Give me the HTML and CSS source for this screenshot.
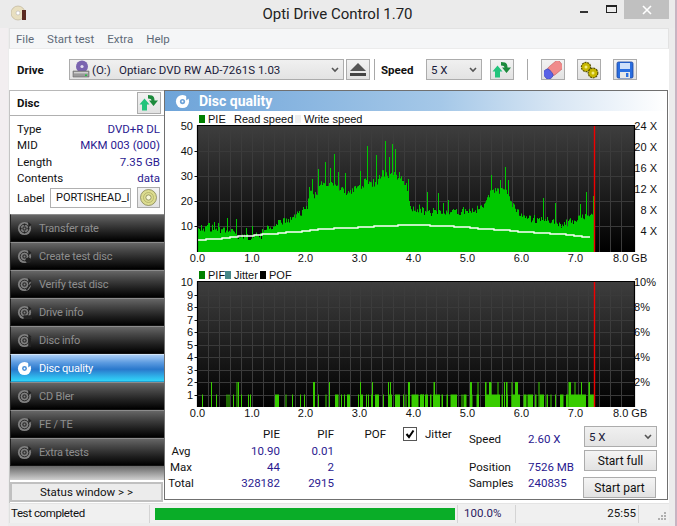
FILE: index.html
```html
<!DOCTYPE html>
<html lang="en">
<head>
<meta charset="utf-8">
<title>Opti Drive Control 1.70</title>
<link rel="stylesheet" href="styles.css">
</head>
<body>
<svg class="defs" width="0" height="0">
  <defs>
    <symbol id="i-disc" viewBox="0 0 16 16">
      <circle cx="8" cy="8" r="7" fill="currentColor"/>
      <circle cx="8" cy="8" r="4.6" fill="none" stroke="#222" stroke-width="1"/>
      <circle cx="8" cy="8" r="2.4" fill="#333"/>
      <circle cx="8" cy="8" r="1" fill="currentColor"/>
      <path d="M12 1 L15.5 4 L12 7 Z" fill="#222"/>
    </symbol>
    <symbol id="i-refresh" viewBox="0 0 22 20">
      <path d="M1.5 11.5 L6.5 5.5 L11.5 11.5 L9 11.5 L9 17.5 L4 17.5 L4 11.5 Z" fill="#22c47c"/>
      <path d="M10 2 L14 2.5 Q16.5 3.5 16.5 7.5 L20 7.5 L15.5 13 L11 7.5 L13.5 7.5 Q13.5 5.5 10 5.5 Z" fill="#1c8a3c"/>
    </symbol>
  </defs>
</svg>
<div class="window">
  <header class="titlebar">
    <div class="app-icon">
      <svg width="16" height="16" viewBox="0 0 16 16"><circle cx="7" cy="8" r="7" fill="#e8dfc0" stroke="#b8ad90" stroke-width=".6"/><circle cx="7" cy="8" r="2" fill="#fff" stroke="#aaa" stroke-width=".5"/><rect x="11" y="5" width="4" height="10" fill="#5a2a20"/></svg>
    </div>
    <div class="title">Opti Drive Control 1.70</div>
    <div class="win-controls">
      <span class="win-min"></span>
      <span class="win-max"></span>
      <span class="win-close">
        <svg width="10" height="10" viewBox="0 0 10 10"><path d="M1 1 L9 9 M9 1 L1 9" stroke="#fff" stroke-width="1.6"/></svg>
      </span>
    </div>
  </header>
  <div class="client">
    <nav class="menu">
      <span class="menu-item">File</span>
      <span class="menu-item">Start test</span>
      <span class="menu-item">Extra</span>
      <span class="menu-item">Help</span>
    </nav>
    <div class="toolbar">
      <span class="tool-label drive-label">Drive</span>
      <div class="combo drive-combo">
        <svg class="drive-icon" width="18" height="19" viewBox="0 0 18 19">
          <circle cx="10" cy="6.5" r="6" fill="#7a64b0"/><circle cx="10" cy="6.5" r="1.6" fill="#e4def0"/>
          <path d="M1 11 L17 11 L17 17 L1 17 Z" fill="#9a9a9a" stroke="#666" stroke-width=".6"/>
          <rect x="2" y="12" width="14" height="1.4" fill="#cfcfcf"/><rect x="13" y="14.5" width="2" height="1.5" fill="#20c040"/>
        </svg>
        <span class="drive-letter">(O:)</span>
        <span class="combo-text">Optiarc DVD RW AD-7261S 1.03</span>
        <svg class="chevron" width="8" height="6" viewBox="0 0 8 6"><path d="M1 1 L4 4 L7 1" fill="none" stroke="#555" stroke-width="1.6"/></svg>
      </div>
      <button class="tool-btn eject-btn">
        <svg width="16" height="13" viewBox="0 0 16 13"><path d="M8 0 L16 8 L0 8 Z" fill="#555"/><rect y="10" width="16" height="3" fill="#444"/></svg>
      </button>
      <span class="tool-sep sep-speed"></span>
      <span class="tool-label speed-label">Speed</span>
      <div class="combo speed-combo">
        <span class="combo-text">5 X</span>
        <svg class="chevron" width="8" height="6" viewBox="0 0 8 6"><path d="M1 1 L4 4 L7 1" fill="none" stroke="#555" stroke-width="1.6"/></svg>
      </div>
      <button class="tool-btn refresh-btn"><svg width="22" height="20"><use href="#i-refresh"/></svg></button>
      <span class="tool-sep sep-tools"></span>
      <button class="tool-btn erase-btn">
        <svg width="18" height="18" viewBox="0 0 18 18"><g transform="rotate(-40 9 9)"><rect x="5.5" y="4" width="14" height="10" rx="2" fill="#f08a8a" stroke="#c86060" stroke-width=".6"/><rect x="-1.5" y="4" width="8" height="10" rx="3" fill="#5a62e6" stroke="#3a40a8" stroke-width=".6"/></g></svg>
      </button>
      <button class="tool-btn gears-btn">
        <svg width="19" height="18" viewBox="0 0 19 18"><circle cx="6" cy="6" r="4.6" fill="#c8b800" stroke="#5a5200" stroke-width="1.2" stroke-dasharray="2 .8"/><circle cx="6" cy="6" r="1.5" fill="#f4ec80"/><circle cx="13" cy="12" r="4.8" fill="#c8b800" stroke="#5a5200" stroke-width="1.2" stroke-dasharray="2 .8"/><circle cx="13" cy="12" r="1.5" fill="#f4ec80"/></svg>
      </button>
      <button class="tool-btn save-btn">
        <svg width="18" height="18" viewBox="0 0 18 18"><rect x="1" y="1" width="16" height="16" rx="1.5" fill="#2a6ee0" stroke="#1a44a0" stroke-width=".8"/><rect x="4" y="2" width="10" height="6" fill="#cfe0fa"/><rect x="4" y="11" width="10" height="6" fill="#e8e8e8"/><rect x="10" y="12" width="2.4" height="4" fill="#2a6ee0"/></svg>
      </button>
    </div>
    <div class="main">
      <aside class="sidebar">
        <div class="disc-head">
          <span class="disc-title">Disc</span>
          <button class="tool-btn disc-refresh"><svg width="22" height="20"><use href="#i-refresh"/></svg></button>
        </div>
        <dl class="disc-info">
          <div class="info-row"><dt>Type</dt><dd>DVD+R DL</dd></div>
          <div class="info-row"><dt>MID</dt><dd>MKM 003 (000)</dd></div>
          <div class="info-row"><dt>Length</dt><dd>7.35 GB</dd></div>
          <div class="info-row"><dt>Contents</dt><dd>data</dd></div>
        </dl>
        <div class="label-row">
          <span class="label-name">Label</span>
          <span class="label-input">PORTISHEAD_I</span>
          <button class="tool-btn cd-btn">
            <svg width="17" height="17" viewBox="0 0 17 17"><circle cx="8.5" cy="8.5" r="8" fill="#dcdc90" stroke="#77774a" stroke-width=".7"/><circle cx="8.5" cy="8.5" r="5" fill="none" stroke="#a8a860" stroke-width=".7"/><circle cx="8.5" cy="8.5" r="2.6" fill="#f8f8d8" stroke="#77774a" stroke-width=".7"/></svg>
          </button>
        </div>
        <ul class="nav">
          <li class="nav-item"><svg class="nav-icon" width="15" height="15" viewBox="0 0 16 16"><use href="#i-disc" width="16" height="16"/><path class="ic-cut" d="M3 8h2M11 8h2M8 3v2M8 11v2"/></svg>Transfer rate</li>
          <li class="nav-item"><svg class="nav-icon" width="15" height="15" viewBox="0 0 16 16"><use href="#i-disc" width="16" height="16"/><circle class="ic-mark" cx="12" cy="12" r="3"/></svg>Create test disc</li>
          <li class="nav-item"><svg class="nav-icon" width="15" height="15" viewBox="0 0 16 16"><use href="#i-disc" width="16" height="16"/><path class="ic-cut" d="M10 14l5-7"/></svg>Verify test disc</li>
          <li class="nav-item"><svg class="nav-icon" width="15" height="15" viewBox="0 0 16 16"><use href="#i-disc" width="16" height="16"/><rect class="ic-mark" x="7" y="11" width="9" height="4"/></svg>Drive info</li>
          <li class="nav-item"><svg class="nav-icon" width="15" height="15" viewBox="0 0 16 16"><use href="#i-disc" width="16" height="16"/><rect class="ic-mark" x="12" y="5" width="3" height="10"/></svg>Disc info</li>
          <li class="nav-item nav-active"><svg class="nav-icon" width="15" height="15" viewBox="0 0 16 16"><circle cx="8" cy="8" r="7" fill="#fff"/><circle cx="8" cy="8" r="2.6" fill="#4a90d8"/><circle cx="8" cy="8" r="1" fill="#fff"/><path d="M12 1 L15.5 4 L12 7 Z" fill="#4a90d8"/></svg>Disc quality</li>
          <li class="nav-item"><svg class="nav-icon" width="15" height="15" viewBox="0 0 16 16"><use href="#i-disc" width="16" height="16"/></svg>CD Bler</li>
          <li class="nav-item"><svg class="nav-icon" width="15" height="15" viewBox="0 0 16 16"><use href="#i-disc" width="16" height="16"/></svg>FE / TE</li>
          <li class="nav-item"><svg class="nav-icon" width="15" height="15" viewBox="0 0 16 16"><use href="#i-disc" width="16" height="16"/></svg>Extra tests</li>
        </ul>
        <div class="nav-fill"></div>
        <button class="status-btn">Status window &gt; &gt;</button>
      </aside>
      <section class="panel">
        <h1 class="panel-head">
          <svg class="panel-icon" width="15" height="15" viewBox="0 0 16 16"><circle cx="8" cy="8" r="7" fill="#fff"/><circle cx="8" cy="8" r="2.8" fill="#6fa3d8"/><circle cx="8" cy="8" r="1" fill="#fff"/><path d="M12 1 L15.5 4 L12 7 Z" fill="#6fa3d8"/></svg>
          Disc quality
        </h1>
        <svg class="chart" id="chart-pie" width="502" height="157" viewBox="165 111 502 157">
          <defs><linearGradient id="plot-bg" x1="0" y1="0" x2="0" y2="1"><stop offset="0" stop-color="#3e3e3e"/><stop offset="1" stop-color="#000"/></linearGradient></defs>
          <rect class="key-green" x="199" y="115" width="6" height="8"/>
          <text class="ax" x="208" y="119">PIE</text>
          <text class="ax" x="234" y="119">Read speed</text>
          <rect class="key-write" x="295" y="115" width="6" height="8"/>
          <text class="ax" x="304" y="119">Write speed</text>
          <g class="plot"></g>
          <g class="ax-l">
            <text x="193" y="126">50</text><text x="193" y="151">40</text><text x="193" y="176">30</text><text x="193" y="201">20</text><text x="193" y="226">10</text>
          </g>
          <g class="ax-r">
            <text x="657" y="126">24 X</text><text x="657" y="147">20 X</text><text x="657" y="168">16 X</text><text x="657" y="189">12 X</text><text x="657" y="210">8 X</text><text x="657" y="231">4 X</text>
          </g>
          <g class="ax-b">
            <text x="197.5" y="258">0.0</text><text x="252" y="258">1.0</text><text x="305.5" y="258">2.0</text><text x="359.5" y="258">3.0</text><text x="413.5" y="258">4.0</text><text x="467.5" y="258">5.0</text><text x="521.5" y="258">6.0</text><text x="575.5" y="258">7.0</text>
          </g>
          <text class="ax" x="613" y="258">8.0 GB</text>
        </svg>
        <svg class="chart" id="chart-pif" width="502" height="153" viewBox="165 268 502 153">
          <rect class="key-green" x="199" y="271" width="6" height="8"/>
          <text class="ax" x="208" y="275">PIF</text>
          <rect class="key-jitter" x="225" y="271" width="6" height="8"/>
          <text class="ax" x="234" y="275">Jitter</text>
          <rect class="key-black" x="260" y="271" width="6" height="8"/>
          <text class="ax" x="269" y="275">POF</text>
          <g class="plot"></g>
          <g class="ax-l">
            <text x="193" y="282">10</text><text x="193" y="295">9</text><text x="193" y="307">8</text><text x="193" y="320">7</text><text x="193" y="332">6</text><text x="193" y="345">5</text><text x="193" y="357">4</text><text x="193" y="370">3</text><text x="193" y="382">2</text><text x="193" y="395">1</text>
          </g>
          <g class="ax-r">
            <text x="656" y="282">10%</text><text x="650" y="307">8%</text><text x="650" y="332">6%</text><text x="650" y="357">4%</text><text x="650" y="382">2%</text>
          </g>
          <g class="ax-b">
            <text x="197.5" y="413">0.0</text><text x="252" y="413">1.0</text><text x="305.5" y="413">2.0</text><text x="359.5" y="413">3.0</text><text x="413.5" y="413">4.0</text><text x="467.5" y="413">5.0</text><text x="521.5" y="413">6.0</text><text x="575.5" y="413">7.0</text>
          </g>
          <text class="ax" x="613" y="413">8.0 GB</text>
        </svg>
        <div class="stats">
          <div class="stat-table">
            <span></span><span class="sh">PIE</span><span class="sh">PIF</span><span class="sh">POF</span>
            <span class="sl">Avg</span><span class="sv">10.90</span><span class="sv">0.01</span><span></span>
            <span class="sl">Max</span><span class="sv">44</span><span class="sv">2</span><span></span>
            <span class="sl">Total</span><span class="sv">328182</span><span class="sv">2915</span><span></span>
          </div>
          <div class="jitter">
            <span class="check"><svg width="12" height="12" viewBox="0 0 12 12"><path d="M2.5 6 L5 9 L9.5 2.5" fill="none" stroke="#000" stroke-width="2"/></svg></span>
            <span>Jitter</span>
          </div>
          <div class="live">
            <span class="ll">Speed</span><span class="lv">2.60 X</span>
            <span class="ll"></span><span class="lv"></span>
            <span class="ll">Position</span><span class="lv">7526 MB</span>
            <span class="ll">Samples</span><span class="lv">240835</span>
          </div>
          <div class="actions">
            <div class="combo action-combo">
              <span class="combo-text">5 X</span>
              <svg class="chevron" width="8" height="6" viewBox="0 0 8 6"><path d="M1 1 L4 4 L7 1" fill="none" stroke="#555" stroke-width="1.6"/></svg>
            </div>
            <button class="start-btn start-full">Start full</button>
            <button class="start-btn start-part">Start part</button>
          </div>
        </div>
      </section>
    </div>
    <footer class="statusbar">
      <span class="st-msg">Test completed</span>
      <div class="progress"></div>
      <span class="st-pct">100.0%</span>
      <span class="st-time">25:55</span>
      <svg class="grip" width="10" height="9" viewBox="0 0 10 9"><path d="M7 0h2v2H7zM4 3h2v2H4zM7 3h2v2H7zM1 6h2v2H1zM4 6h2v2H4zM7 6h2v2H7z" fill="#b0b0b0"/></svg>
    </footer>
  </div>
</div>
<script src="chart.js"></script>
</body>
</html>
```
FILE: styles.css
```css
* { box-sizing: border-box; }
html, body { margin: 0; padding: 0; }
body {
  width: 677px; height: 526px; overflow: hidden;
  background: #c8b4c2;
  font-family: Roboto, "Noto Sans", sans-serif;
  font-size: 11.5px; color: #111;
}
.defs { position: absolute; }
.window {
  width: 675px; height: 526px;
  display: flex; flex-direction: column;
  background: linear-gradient(90deg, #f2eef0 0 8px, #ececec 8px);
}
.titlebar {
  height: 28px; flex: none;
  display: grid; grid-template-columns: 1fr auto 1fr;
  background: #ebebeb;
}
.app-icon { padding: 5px 0 0 11px; }
.title { font-size: 15px; line-height: 28px; color: #222; }
.win-controls { display: flex; justify-content: flex-end; padding-right: 6px; align-items: flex-start; }
.win-min { width: 8px; height: 2px; background: #333; margin: 11px 18px 0 0; }
.win-max { width: 11px; height: 8px; border: 1px solid #222; border-top-width: 2px; margin: 5px 7px 0 0; }
.win-close { width: 45px; height: 19px; background: #c0c0c0; display: flex; align-items: center; justify-content: center; }

.client {
  margin-left: 9px; width: 660px; height: 495px; flex: none;
  display: flex; flex-direction: column;
  background: #fff;
}
.menu {
  height: 21px; flex: none; background: #f5f6f7;
  border: 1px solid #e2e2e2; border-bottom-color: #ececec;
  display: flex; align-items: center; padding-left: 6px; gap: 13px;
}
.menu-item { font-size: 11.5px; color: #5f6a78; }

.toolbar { height: 41px; flex: none; display: flex; align-items: center; background: #fff; }
.tool-label { font-weight: 700; font-size: 11.5px; color: #111; }
.drive-label { margin-left: 8px; width: 52px; }
.combo {
  height: 21px; display: flex; align-items: center;
  background: linear-gradient(#f0f0f0, #e3e3e3);
  border: 1px solid #acacac; font-size: 11.5px; color: #1a1a3a;
}
.drive-combo { width: 275px; }
.drive-icon { margin-left: 2px; flex: none; }
.drive-letter { margin-left: 2px; width: 27px; }
.chevron { margin-left: auto; margin-right: 4px; flex: none; }
.tool-btn {
  width: 24px; height: 21px; padding: 0; flex: none;
  display: flex; align-items: center; justify-content: center;
  background: linear-gradient(#f2f2f2, #e2e2e2);
  border: 1px solid #acacac;
}
.eject-btn { margin-left: 2px; }
.tool-sep { width: 1px; height: 21px; background: #a8a8a8; flex: none; }
.sep-speed { margin-left: 4px; }
.speed-label { margin-left: 6px; width: 45px; }
.speed-combo { width: 56px; padding-left: 4px; }
.refresh-btn { margin-left: 8px; }
.sep-tools { margin-left: 13px; }
.erase-btn { margin-left: 13px; }
.gears-btn { margin-left: 12px; }
.save-btn { margin-left: 12px; }

.main { height: 413px; flex: none; display: flex; align-items: flex-start; }
.sidebar { width: 155px; height: 413px; flex: none; display: flex; flex-direction: column; background: #fff; border-left: 1px solid #c4c4c4; }
.disc-head {
  height: 26px; flex: none; display: flex; align-items: center; justify-content: space-between;
  border-top: 1px solid #b8b8b8; border-bottom: 1px solid #b0b0b0;
  padding: 0 3px 0 7px;
}
.disc-title { font-weight: 700; font-size: 11.5px; }
.disc-refresh { height: 22px; }
.disc-info { margin: 5px 4px 0 7px; }
.info-row { display: flex; justify-content: space-between; height: 16.3px; line-height: 16px; }
.info-row dt { color: #111; }
.info-row dd { margin: 0; color: #2a1a90; }
.label-row { display: flex; align-items: center; margin: 1px 3px 0 7px; height: 21px; }
.label-name { width: 33px; flex: none; }
.label-input {
  width: 81px; height: 20px; border: 1px solid #b0b0b0; background: #fff; line-height: 18px;
  padding-left: 5px; white-space: nowrap; flex: none; font-size: 11px;
}
.cd-btn { margin-left: 6px; height: 21px; width: 23px; }
.nav { list-style: none; margin: 6px 0 0; padding: 0; flex: none; }
.nav-item {
  height: 28px; display: flex; align-items: center; gap: 7px;
  padding-left: 6px; color: #8e8e8e; font-size: 11px; letter-spacing: -.2px;
  background: linear-gradient(#666 0, #4a4a4a 25%, #1c1c1c 70%, #000);
  border-top: 1px solid #8c8c8c; border-bottom: 1px solid #111;
  border-left: 1px solid #222;
}
.nav-icon { color: #808080; flex: none; }
.ic-cut { stroke: #222; stroke-width: 1.4; fill: none; }
.ic-mark { fill: #222; }
.nav-active {
  color: #fff;
  background: linear-gradient(#a8ccf4 0, #5a9ae0 30%, #2a78cc 55%, #2fb8ec 85%, #30d4f8);
  border-top-color: #d0e4f8; border-bottom-color: #20a0d0;
}
.nav-fill { height: 14px; flex: none; background: linear-gradient(#666, #d0d0d0); }
.status-btn {
  height: 20px; margin: 2px 0 0 0; flex: none; width: 153px;
  border: 2px solid #c0c0c0; background: #ececec;
  font-family: inherit; font-size: 11.5px; color: #111; padding: 0;
}

.panel {
  width: 504px; height: 410px; flex: none;
  border: 1px solid #707070; background: #fff;
  display: flex; flex-direction: column;
}
.panel-head {
  height: 20px; margin: 0; flex: none;
  display: flex; align-items: center; gap: 9px; padding-left: 10px;
  font-size: 14px; font-weight: 700; color: #fff;
  background: linear-gradient(90deg, #6ea4d9 0, #a5c8e8 55%, #d8e6f4 78%, #fff 100%);
}
.panel-icon { flex: none; }
.chart { display: block; flex: none; }
.ax, .ax-l text, .ax-r text, .ax-b text {
  font-family: "Liberation Sans", Arial, sans-serif; font-size: 11px; fill: #111;
  dominant-baseline: central;
}
.ax-l text, .ax-r text { text-anchor: end; }
.ax-b text { text-anchor: middle; }
.key-green { fill: #008000; }
.key-write { fill: #eeeeee; }
.key-jitter { fill: #468888; }
.key-black { fill: #000; }

.stats { flex: 1; display: flex; align-items: flex-start; }
.stat-table {
  width: 221px; flex: none; display: grid; padding-top: 5px;
  grid-template-columns: 60px 55px 54px 52px; grid-template-rows: 17px 16px 16px 16px;
  line-height: 16px;
}
.sh { text-align: right; }
.sl { width: 32px; text-align: center; }
.sv { text-align: right; color: #2a1a90; }
.jitter { margin-left: 17px; width: 66px; flex: none; display: flex; align-items: center; gap: 8px; padding-top: 6px; }
.check { width: 14px; height: 14px; border: 1px solid #555; background: #fff; flex: none; display: flex; align-items: center; justify-content: center; }
.live {
  width: 115px; flex: none; display: grid; padding-top: 10px;
  grid-template-columns: 59px 56px; grid-template-rows: 16px 12px 16px 16px; line-height: 16px;
}
.lv { color: #2a1a90; }
.actions { width: 74px; flex: none; display: flex; flex-direction: column; padding-top: 5px; }
.action-combo { width: 73px; padding-left: 4px; height: 21px; }
.start-btn {
  width: 73px; height: 21px; padding: 0; font-family: inherit; font-size: 12px; color: #111;
  background: linear-gradient(#f4f4f4, #e2e2e2); border: 1px solid #acacac;
}
.start-full { margin-top: 3px; }
.start-part { margin-top: 6px; margin-left: -1px; }

.statusbar {
  height: 20px; flex: none; display: flex; align-items: center;
  background: #f0f0f0; font-size: 11.5px; border-top: 1px solid #e4e4e4; border-left: 1px solid #e0e0e0;
}
.st-msg { width: 140px; flex: none; padding-left: 1px; border-right: 1px solid #d4d4d4; line-height: 16px; height: 18px; letter-spacing: -.4px; }
.progress { width: 300px; height: 12px; margin-left: 5px; flex: none; background: #0aad28; }
.st-pct { margin-left: 2px; width: 59px; flex: none; padding-left: 6px; color: #2a1a60; border-left: 1px solid #d4d4d4; border-right: 1px solid #d4d4d4; line-height: 16px; height: 18px; }
.st-time { width: 123px; flex: none; text-align: right; padding-right: 2px; border-right: 1px solid #d4d4d4; line-height: 16px; height: 18px; }
.grip { margin-left: 18px; margin-top: 6px; flex: none; }
```
FILE: chart.js
```js
var NS = 'http://www.w3.org/2000/svg';
function el(parent, tag, attrs) {
  var n = document.createElementNS(NS, tag);
  for (var k in attrs) n.setAttribute(k, attrs[k]);
  parent.appendChild(n);
  return n;
}
var X0 = 197.5, XSTEP = 10.86, XR = 634, REDX = 594.5;

function frame(g, top, bottom, rowStep) {
  el(g, 'rect', { x: X0, y: top, width: XR - X0, height: bottom - top, fill: 'url(#plot-bg)' });
  for (var i = 1; i < 40; i++) {
    var x = Math.round(X0 + XSTEP * i) + 0.5;
    el(g, 'line', { x1: x, x2: x, y1: top, y2: bottom, stroke: '#3c3c3c', 'stroke-width': 1 });
  }
  for (var y = top + rowStep; y < bottom - 2; y += rowStep) {
    var yy = Math.round(y) + 0.5;
    el(g, 'line', { x1: X0, x2: XR, y1: yy, y2: yy, stroke: '#3a3a3a', 'stroke-width': 1 });
    el(g, 'line', { x1: X0 - 3, x2: X0, y1: yy, y2: yy, stroke: '#111', 'stroke-width': 1 });
  }
}
function border(g, top, bottom) {
  el(g, 'path', { d: 'M' + X0 + ' ' + bottom + 'V' + (top - .5) + 'H' + (XR + .5) + 'V' + bottom, fill: 'none', stroke: '#000', 'stroke-width': 1.2 });
  el(g, 'line', { x1: REDX, x2: REDX, y1: top, y2: bottom, stroke: '#f00000', 'stroke-width': 1.4 });
}
function interp(pts, x) {
  for (var i = 1; i < pts.length; i++) {
    if (x <= pts[i][0]) {
      var a = pts[i - 1], b = pts[i];
      return a[1] + (b[1] - a[1]) * (x - a[0]) / (b[0] - a[0]);
    }
  }
  return pts[pts.length - 1][1];
}

/* PIE plot */
(function () {
  var g = document.querySelector('#chart-pie .plot');
  var top = 126, bottom = 252;
  frame(g, top, bottom, 25.1);
  var env = [[198,229],[208,228],[218,230],[232,231],[238,236],[248,237],[262,236],[265,230],[275,227],[280,222],[288,220],[295,217],[302,212],[307,207],[309,192],[315,197],[319,187],[325,185],[332,185],[338,188],[348,193],[355,190],[362,185],[368,182],[375,185],[382,173],[388,175],[395,175],[402,180],[407,190],[410,208],[422,210],[425,213],[437,213],[453,212],[470,212],[482,208],[488,195],[495,190],[507,192],[512,205],[520,215],[533,220],[547,220],[560,225],[568,223],[580,218],[595,215]];
  var spikes = {201:225,209:223,214:222,218:223,227:218,236:219,246:228,252:226,262:229,278:220,309:187,312:179,318:169,325:162,330:168,334:154,338:172,345:173,360:171,367:146,376:155,385:141,389:157,392:144,395:149,399:172,408:179,427:192,438:193,443:203,448:200,491:175,500:180,505:167,508:180,543:198,555:203,580:204,586:192,593:196};
  var seed = 7;
  var d = 'M198 ' + bottom;
  for (var x = 198; x < 595; x++) {
    seed = (seed * 137 + 59) % 1009;
    var n = (seed % 7) - 3;
    if (seed % 5 === 0) n -= 2;
    var y = spikes[x] !== undefined ? spikes[x] : interp(env, x) + n;
    d += 'V' + y.toFixed(1) + 'H' + (x + 1);
  }
  d += 'V' + bottom + 'Z';
  el(g, 'path', { d: d, fill: '#00c800' });
  var curve = [[198,240],[265,234],[332,228.3],[408,225],[420,225],[453,226.7],[487,229.3],[520,231.7],[553,234],[594,237.7]];
  var c = 'M198 240';
  for (var cx = 206; cx <= 594; cx += 8) {
    c += 'H' + cx + 'V' + Math.round(interp(curve, cx));
  }
  el(g, 'path', { d: c, fill: 'none', stroke: '#fff', 'stroke-width': 1.4 });
  border(g, top, bottom);
})();

/* PIF plot: spans are [from, to] on the x axis in page pixels */
(function () {
  var g = document.querySelector('#chart-pif .plot');
  var top = 282, bottom = 407;
  frame(g, top, bottom, 12.5);
  var one = [[202,203],[216,217],[226.5,227.5],[228.5,229.5],[233,234],[241,242],[248,249],[250,251],[275,279],[285.5,286.5],[292,293],[300,301],[304,305],[318,319],[325.5,326.5],[335,338.5],[341,342],[344,345],[347,350],[358,359],[360,363],[366,367],[368,369],[371,372],[375,379],[383,384],[388,392],[395,400],[403,404],[405.5,406.5],[411.5,418.5],[421,422],[423,424],
    [420,424],[425,428],[430,431.5],[433,440],[441.5,443],[446.5,448],[450.5,457],[461.5,462.5],[463.5,466.5],[470,472.5],[476.5,479],[485,500],[501.5,503],[506,508],[511.5,515],[516.5,520],[523.5,526.5],[527.5,533],[535,536.5],[539.5,544],[546.5,548],[550.5,551.5],[555,556],[560,563.5],[566,568.5],[570,586],[588.5,595]];
  var two = [[211,212],[236.5,237.5],[238,239],[313,315],[329,330],[360,361],[372,373],[388,389],[390,391],[408,410],[433.5,435],[470,472],[477.5,478.5],[485,486.5],[489,491.5],[497.5,498.5],[504,505],[506,507.5],[511.5,512.5],[515,518],[538.5,539.5],[568.5,571],[574.5,575.5],[581,582],[588.5,590]];
  function bars(list, y) {
    list.forEach(function (s) {
      el(g, 'rect', { x: s[0], y: y, width: s[1] - s[0], height: bottom - y, fill: '#38cc00' });
    });
  }
  bars(one, 394.5);
  bars(two, 382);
  border(g, top, bottom);
})();
```
